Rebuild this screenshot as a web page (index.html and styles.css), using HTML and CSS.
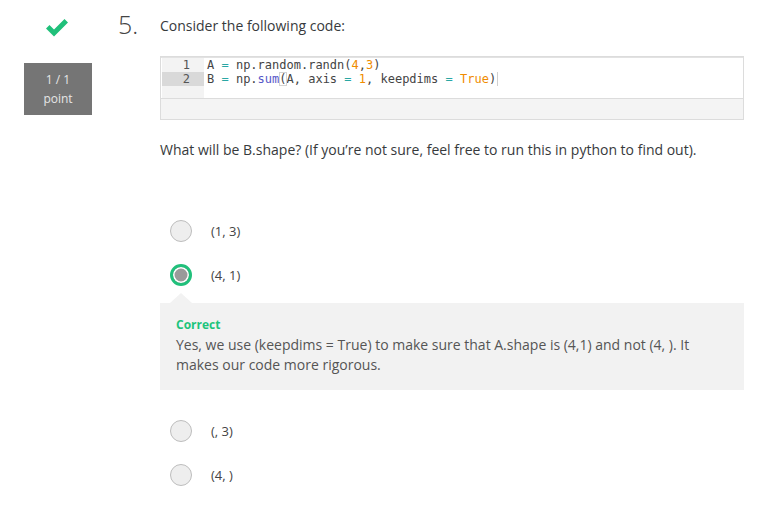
FILE: index.html
```html
<!DOCTYPE html>
<html lang="en">
<head>
<meta charset="utf-8">
<title>Quiz question 5</title>
<link rel="stylesheet" href="styles.css">
</head>
<body>
<div class="question">
  <div class="status">
    <svg class="check" width="24" height="18" viewBox="0 0 24 18" aria-hidden="true">
      <path d="M1 9.5 L4.5 6 L9 10.5 L19.5 0 L23 3.5 L9 17.5 Z" fill="#20c07a"/>
    </svg>
    <div class="score">1 / 1<br>point</div>
  </div>
  <div class="num">5.</div>
  <div class="content">
    <p class="prompt">Consider the following code:</p>
    <div class="code">
      <div class="editor">
        <div class="gutter">
          <div class="ln">1</div>
          <div class="ln active">2</div>
        </div>
        <div class="lines">
          <div class="line">A <span class="op">=</span> np.random.randn(<span class="nm">4</span>,<span class="nm">3</span>)</div>
          <div class="line">B <span class="op">=</span> np.<span class="fn">sum</span><span class="match">(</span>A, axis <span class="op">=</span> <span class="nm">1</span>, keepdims <span class="op">=</span> <span class="nm">True</span>)<span class="cursor"></span></div>
        </div>
      </div>
      <div class="bar"></div>
    </div>
    <p class="ask">What will be B.shape? (If you’re not sure, feel free to run this in python to find out).</p>
    <div class="options">
      <div class="option"><span class="radio"></span><span class="label">(1, 3)</span></div>
      <div class="option"><span class="radio checked"></span><span class="label">(4, 1)</span></div>
      <div class="feedback">
        <div class="verdict">Correct</div>
        <p class="explain">Yes, we use (keepdims = True) to make sure that A.shape is (4,1) and not (4, ). It makes our code more rigorous.</p>
      </div>
      <div class="option gap-after-feedback"><span class="radio"></span><span class="label">(, 3)</span></div>
      <div class="option"><span class="radio"></span><span class="label">(4, )</span></div>
    </div>
  </div>
</div>
</body>
</html>
```
FILE: styles.css
```css
* { box-sizing: border-box; }
html, body { margin: 0; padding: 0; background: #fff; }
body {
  font-family: "Open Sans", "DejaVu Sans", sans-serif;
  font-size: 14px;
  line-height: 20px;
  color: #373a3c;
}
.question {
  display: flex;
  align-items: flex-start;
}
.status {
  width: 68px;
  margin-left: 24px;
  display: flex;
  flex-direction: column;
  align-items: center;
}
.check {
  display: block;
  margin-top: 19px;
  margin-left: -2px;
}
.score {
  margin-top: 26px;
  width: 68px;
  height: 52px;
  background: #757575;
  color: #e6e6e6;
  font-size: 12px;
  line-height: 19px;
  text-align: center;
  padding-top: 7px;
}
.num {
  width: 42px;
  margin-left: 26px;
  margin-top: 12px;
  font-size: 25px;
  line-height: 25px;
  font-weight: 300;
  color: #444;
}
.content {
  width: 584px;
}
.prompt {
  margin: 16px 0 0;
}
.code {
  margin-top: 20px;
  border: 1px solid #dcdcdc;
  background: #f4f4f4;
}
.editor {
  display: flex;
  height: 42px;
  background: #fff;
  border-top: 1px solid #e2e2e2;
  border-bottom: 1px solid #dcdcdc;
}
.gutter {
  width: 42px;
  margin-left: 1px;
  background: #f3f3f3;
}
.ln {
  font-family: "DejaVu Sans Mono", monospace;
  font-size: 12px;
  line-height: 14px;
  height: 14px;
  color: #555;
  text-align: right;
  padding-right: 14px;
}
.ln.active { background: #d9d9d9; }
.lines {
  padding-left: 3px;
}
.line {
  font-family: "DejaVu Sans Mono", monospace;
  font-size: 12px;
  line-height: 14px;
  height: 14px;
  color: #444;
  white-space: pre;
}
.op { color: #2aa7a4; }
.nm { color: #f08c00; }
.fn { color: #5656c8; }
.match { outline: 1px solid #d4d4d4; outline-offset: -1px; }
.cursor {
  display: inline-block;
  width: 0;
  height: 14px;
  vertical-align: top;
  margin-left: 1px;
  border-left: 1px solid #d0d0d0;
}
.bar { height: 20px; }
.ask {
  margin: 20px 0 0;
}
.options {
  margin-top: 60px;
  display: flex;
  flex-direction: column;
}
.option {
  display: flex;
  align-items: center;
  height: 22px;
  padding-left: 10px;
}
.option + .option { margin-top: 22px; }
.option.gap-after-feedback { margin-top: 30px; }
.radio {
  width: 22px;
  height: 22px;
  border-radius: 50%;
  background: #eee;
  border: 1px solid #bdbdbd;
  flex: none;
}
.radio.checked {
  border: 3px solid #21c07b;
  background: #9a9a9a;
  box-shadow: inset 0 0 0 1.5px #fff;
}
.label {
  margin-left: 19px;
  font-size: 13px;
  line-height: 20px;
  color: #444;
}
.feedback {
  position: relative;
  margin-top: 17px;
  background: #f2f2f2;
  padding: 14px 16px 15px;
}
.feedback::before {
  content: "";
  position: absolute;
  left: 10px;
  top: -10px;
  border-left: 11px solid transparent;
  border-right: 11px solid transparent;
  border-bottom: 10px solid #f2f2f2;
}
.verdict {
  font-size: 12px;
  line-height: 16px;
  font-weight: 700;
  color: #1dc47c;
  margin-bottom: 2px;
}
.explain {
  margin: 0;
  color: #555;
}
```
